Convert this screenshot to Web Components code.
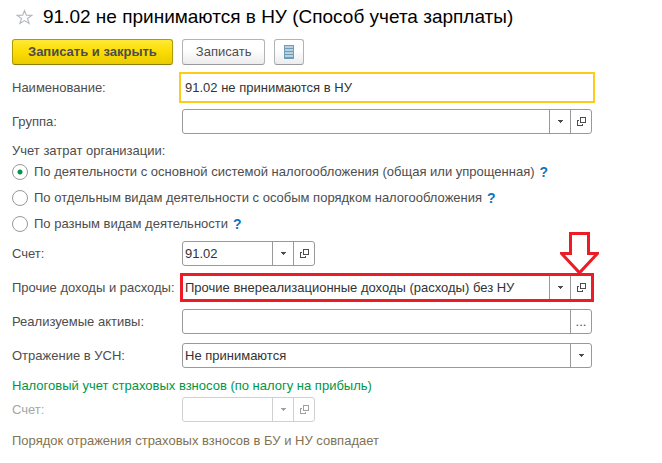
<!DOCTYPE html>
<html lang="ru">
<head>
<meta charset="utf-8">
<title>Способ учета зарплаты</title>
<style>
  body {
    margin: 0;
    background: #fff;
    color: #4d4d4d;
    font: 13px/20px "Liberation Sans", Arial, sans-serif;
  }
</style>
</head>
<body>
<account-form></account-form>

<script>
const ARROW = '<svg width="5" height="3" viewBox="0 0 5 3" fill="currentColor" shape-rendering="crispEdges" aria-hidden="true"><path d="M0 0h5v1H4v1H3v1H2V2H1V1H0z"/></svg>';
const OPEN = '<svg width="9" height="9" viewBox="0 0 9 9" fill="none" stroke="currentColor" shape-rendering="crispEdges" aria-hidden="true"><path d="M3.5 .5h5v5h-5zM2 3.5H.5v5h5V7"/></svg>';

class FormHeader extends HTMLElement {
  connectedCallback() {
    this.attachShadow({ mode: 'open' }).innerHTML = `
      <style>
        :host { display: flex; align-items: center; gap: 10px; height: 34px; color: #000; }
        button { width: 21px; height: 20px; padding: 0; border: 0; background: none; display: flex; align-items: center; justify-content: flex-end; }
        h1 { margin: 0; font-size: 19px; line-height: 24px; font-weight: 400; white-space: nowrap; }
      </style>
      <button type="button" aria-label="В избранное">
        <svg width="17" height="16" viewBox="0 0 19 17" fill="none" stroke="#b4b9c0" stroke-width="1.300" aria-hidden="true"><path d="M9.500 1.400l2 5.100 6.200.2-4.900 3.500 1.800 5.500-5.100-3.200-5.100 3.200 1.800-5.500-4.900-3.500 6.200-.2z"/></svg>
      </button>
      <h1><slot></slot></h1>`;
  }
}
customElements.define('form-header', FormHeader);

class ToolButton extends HTMLElement {
  connectedCallback() {
    const name = this.getAttribute('label');
    this.attachShadow({ mode: 'open' }).innerHTML = `
      <style>
        :host { display: block; }
        button {
          display: flex; align-items: center; justify-content: center; box-sizing: border-box;
          height: 26px; padding: 0 13px; font: inherit; color: #4d4d4d; white-space: nowrap;
          border: 1px solid #b3b3b3; border-bottom-color: #999; border-radius: 3px;
          background: linear-gradient(#fff 40%, #ececec);
        }
        :host([primary]) button {
          padding: 0 15px; font-weight: 700; border-color: #b09b00; border-bottom-color: #8f7e00;
          background: linear-gradient(#ffe935, #fbdc00 50%, #e9cb00);
        }
        :host([icon]) button { padding: 0 9px; }
      </style>
      <button type="button"${name ? ` aria-label="${name}"` : ''}><slot></slot></button>`;
  }
}
customElements.define('tool-button', ToolButton);

class FormField extends HTMLElement {
  connectedCallback() {
    const value = this.getAttribute('value') || '';
    const off = this.hasAttribute('disabled') ? ' disabled' : '';
    const kinds = (this.getAttribute('buttons') || '').split(' ');
    const faces = {
      list: `<button type="button" aria-label="Выбрать из списка"${off}>${ARROW}</button>`,
      open: `<button type="button" aria-label="Открыть"${off}>${OPEN}</button>`,
      more: `<button type="button" aria-label="Выбрать"${off}><span>...</span></button>`
    };
    const control = this.hasAttribute('choice')
      ? `<select id="control"${off}><option>${value}</option></select><i>${ARROW}</i>`
      : `<input id="control" type="text" value="${value}"${off}>${kinds.map(k => faces[k] || '').join('')}`;
    this.attachShadow({ mode: 'open' }).innerHTML = `
      <style>
        :host { display: grid; grid-template-columns: 170px minmax(0, 1fr); align-items: center; }
        label { white-space: nowrap; }
        .box {
          position: relative; display: flex; box-sizing: border-box; height: 25px;
          border: 1px solid #999; border-radius: 3px; background: #fff; color: #333;
        }
        input, select {
          flex: 1; min-width: 0; padding: 0 2px; border: 0; background: none; outline: 0;
          font: inherit; color: inherit; appearance: none; border-radius: 0;
        }
        button, i {
          box-sizing: border-box; width: 21px; padding: 0; border: 0; border-left: 1px solid #999;
          display: flex; align-items: center; justify-content: center; background: none;
          font: inherit; color: #4d4d4d;
        }
        i { pointer-events: none; }
        :host([short]) .box { width: 133px; }
        :host([active]) .box { outline: 2px solid #fccb1c; outline-offset: 1px; border-color: transparent; border-radius: 0; }
        :host([marked]) .box { outline: 3px solid #ed1c24; outline-offset: -1px; border-radius: 0; }
        :host([disabled]) { color: #a6a6a6; }
        :host([disabled]) .box, :host([disabled]) button { border-color: #d0d0d0; color: #a0a0a0; }
        ::slotted(*) { position: absolute; right: -8px; bottom: 24px; }
      </style>
      <label for="control">${this.getAttribute('label')}</label>
      <div class="box">${control}<slot></slot></div>`;
  }
}
customElements.define('form-field', FormField);

class PointerArrow extends HTMLElement {
  connectedCallback() {
    this.attachShadow({ mode: 'open' }).innerHTML = `
      <style>:host { display: block; width: 39px; height: 43px; } svg { display: block; }</style>
      <svg width="39" height="43" viewBox="0 0 39 43" aria-hidden="true"><path fill="#ed1c24" d="M9 0h21v20h9v2L20.500 42h-2L0 22v-2h9z"/><path fill="#fff" d="M12 3h15v20h7L19.500 38.500 5 23h7z"/></svg>`;
  }
}
customElements.define('pointer-arrow', PointerArrow);

class RadioList extends HTMLElement {
  connectedCallback() {
    const rows = [...this.querySelectorAll('option')].map((o, n) => `
      <div class="row">
        <input type="radio" name="kind" id="r${n}"${o.hasAttribute('selected') ? ' checked' : ''}>
        <label for="r${n}">${o.textContent}</label>
        <a href="#help" aria-label="Справка">?</a>
      </div>`).join('');
    this.attachShadow({ mode: 'open' }).innerHTML = `
      <style>
        :host { display: block; }
        fieldset { margin: 0; padding: 0; border: 0; min-width: 0; }
        legend { padding: 0; height: 17px; line-height: 17px; }
        .row { display: flex; align-items: center; height: 26px; white-space: nowrap; }
        input {
          appearance: none; flex: none; box-sizing: border-box; width: 16px; height: 16px;
          margin: 0 6px 0 0; border: 1px solid #999; border-radius: 50%; background: #fff;
        }
        input:checked { background: radial-gradient(circle, #009646 2px, #fff 3px); }
        a { margin-left: 5px; color: #0f74bd; font-size: 14px; font-weight: 700; text-decoration: none; }
      </style>
      <fieldset><legend>${this.getAttribute('label')}</legend>${rows}</fieldset>`;
  }
}
customElements.define('radio-list', RadioList);

class AccountForm extends HTMLElement {
  connectedCallback() {
    this.attachShadow({ mode: 'open' }).innerHTML = `
      <style>
        :host { display: block; padding: 0 70px 12px 12px; }
        .bar { display: flex; gap: 9px; padding: 5px 0 10px; }
        .stack { display: grid; gap: 9px; }
        radio-list { padding: 8px 0 4px; }
        h2 { margin: 8px 0 1px; font: inherit; color: #009646; }
        p { margin: 9px 0 0; color: #7f7354; }
      </style>
      <form-header>91.02 не принимаются в НУ (Способ учета зарплаты)</form-header>
      <div class="bar">
        <tool-button primary>Записать и закрыть</tool-button>
        <tool-button>Записать</tool-button>
        <tool-button icon label="Список">
          <svg width="10" height="14" viewBox="0 0 10 14" shape-rendering="crispEdges" aria-hidden="true"><path fill="#6f9cba" d="M0 0h10v14H0z"/><path fill="#b9d0df" d="M1 1h8v2H1zM1 4h8v2H1zM1 7h8v2H1zM1 10h8v2H1z"/></svg>
        </tool-button>
      </div>
      <div class="stack">
        <form-field active label="Наименование:" value="91.02 не принимаются в НУ"></form-field>
        <form-field label="Группа:" buttons="list open"></form-field>
      </div>
      <radio-list label="Учет затрат организации:">
        <option selected>По деятельности с основной системой налогообложения (общая или упрощенная)</option>
        <option>По отдельным видам деятельности с особым порядком налогообложения</option>
        <option>По разным видам деятельности</option>
      </radio-list>
      <div class="stack">
        <form-field short label="Счет:" value="91.02" buttons="list open"></form-field>
        <form-field marked label="Прочие доходы и расходы:" value="Прочие внереализационные доходы (расходы) без НУ" buttons="list open"><pointer-arrow></pointer-arrow></form-field>
        <form-field label="Реализуемые активы:" buttons="more"></form-field>
        <form-field choice label="Отражение в УСН:" value="Не принимаются"></form-field>
      </div>
      <h2>Налоговый учет страховых взносов (по налогу на прибыль)</h2>
      <form-field short disabled label="Счет:" buttons="list open"></form-field>
      <p>Порядок отражения страховых взносов в БУ и НУ совпадает</p>`;
  }
}
customElements.define('account-form', AccountForm);
</script>
</body>
</html>
